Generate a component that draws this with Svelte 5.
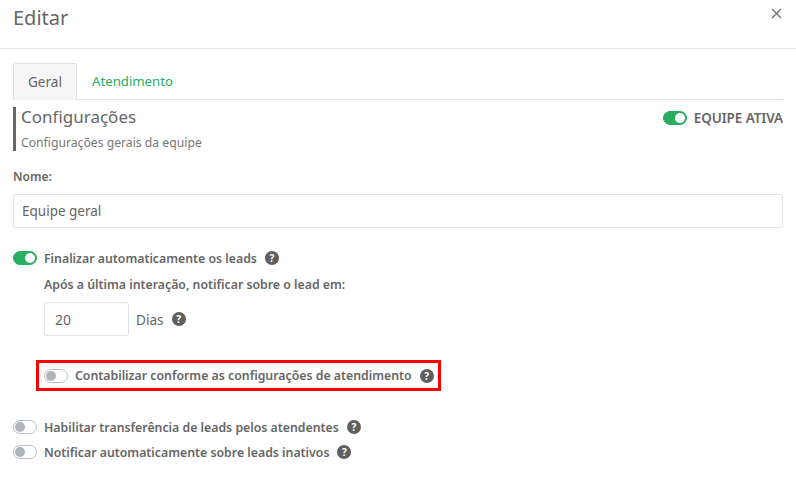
<script>
  const lowerToggles = [
    { id: 'transfer', label: 'Habilitar transferência de leads pelos atendentes' },
    { id: 'inactive', label: 'Notificar automaticamente sobre leads inativos' }
  ];
</script>

{#snippet help()}
  <span class="help" aria-hidden="true">?</span>
{/snippet}

{#snippet toggle(on)}
  <span class="toggle" class:on><span class="knob"></span></span>
{/snippet}

<div class="modal">
  <header class="modal-header">
    <h1>Editar</h1>
    <button class="close" aria-label="Fechar">
      <svg viewBox="0 0 10 10" aria-hidden="true"><path d="M1 1l8 8M9 1l-8 8" /></svg>
    </button>
  </header>

  <div class="modal-body">
    <nav class="tabs">
      <span class="tab active">Geral</span>
      <span class="tab">Atendimento</span>
    </nav>

    <section class="section-head">
      <div class="section-title">
        <h2>Configurações</h2>
        <p>Configurações gerais da equipe</p>
      </div>
      <div class="team-active">
        {@render toggle(true)}
        <span>EQUIPE ATIVA</span>
      </div>
    </section>

    <label class="name-label" for="nome">Nome:</label>
    <input id="nome" class="input" value="Equipe geral" />

    <div class="row auto-row">
      {@render toggle(true)}
      <span class="label">Finalizar automaticamente os leads</span>
      {@render help()}
    </div>

    <div class="nested">
      <p class="label">Após a última interação, notificar sobre o lead em:</p>
      <div class="days">
        <input class="input small" value="20" />
        <span class="unit">Dias</span>
        {@render help()}
      </div>
      <div class="row highlight">
        {@render toggle(false)}
        <span class="label">Contabilizar conforme as configurações de atendimento</span>
        {@render help()}
      </div>
    </div>

    <div class="lower">
      {#each lowerToggles as item (item.id)}
        <div class="row">
          {@render toggle(false)}
          <span class="label">{item.label}</span>
          {@render help()}
        </div>
      {/each}
    </div>
  </div>
</div>

<style>
  :global(body) {
    background: #fff;
  }

  .modal {
    width: 796px;
    height: 482px;
    overflow: hidden;
    font-family: "Noto Sans", "Open Sans", sans-serif;
    color: #666;
    background: #fff;
  }

  .modal-header {
    height: 49px;
    box-sizing: border-box;
    display: flex;
    justify-content: space-between;
    padding: 5px 13px 0;
    border-bottom: 1px solid #e2e4ea;
  }

  h1 {
    margin: 0;
    font-size: 20px;
    font-weight: 400;
    line-height: 26px;
    color: #666;
  }

  .close {
    width: 11px;
    height: 11px;
    padding: 0;
    margin-top: 3px;
    margin-right: 1px;
    border: 0;
    background: none;
  }

  .close svg {
    display: block;
    width: 11px;
    height: 11px;
    fill: none;
    stroke: #777;
    stroke-width: 1.3;
  }

  .modal-body {
    padding: 14px 13px 0;
  }

  .tabs {
    display: flex;
    height: 37px;
    box-sizing: border-box;
    border-bottom: 1px solid #dee2e6;
    font-size: 13.2px;
  }

  .tab {
    padding: 0 15px;
    line-height: 36px;
    color: #27ae60;
  }

  .tab.active {
    width: 64px;
    box-sizing: border-box;
    height: 37px;
    padding: 0;
    font-size: 13.6px;
    text-align: center;
    color: #666;
    background: #f6f6f6;
    border: 1px solid #dee2e6;
    border-bottom: 0;
    border-radius: 3px 3px 0 0;
  }

  .section-head {
    display: flex;
    justify-content: space-between;
    margin-top: 7px;
    height: 44px;
    border-left: 3px solid #666;
  }

  .section-title {
    padding-left: 5px;
  }

  h2 {
    margin: 0;
    font-size: 17px;
    font-weight: 400;
    line-height: 20px;
    color: #666;
  }

  .section-title p {
    margin: 8px 0 0;
    font-size: 12.2px;
    line-height: 16px;
    color: #777;
  }

  .team-active {
    display: flex;
    align-items: center;
    height: 22px;
    font-size: 13.5px;
    font-weight: 600;
    letter-spacing: -0.1px;
    color: #666;
  }

  .name-label {
    display: block;
    margin-top: 17px;
    font-size: 12px;
    font-weight: 600;
    line-height: 17px;
  }

  .input {
    display: block;
    box-sizing: border-box;
    width: 100%;
    height: 34px;
    margin-top: 9px;
    padding: 0 8px;
    border: 1px solid #e0e2e7;
    border-radius: 3px;
    font: inherit;
    font-size: 13.5px;
    color: #666;
    background: #fff;
    outline: none;
  }

  .input.small {
    width: 85px;
    margin: 0;
    padding: 0 10px;
    font-size: 14px;
  }

  .row {
    display: flex;
    align-items: center;
    height: 20px;
  }

  .auto-row {
    margin-top: 20px;
  }

  .label {
    margin: 0;
    font-size: 12.3px;
    font-weight: 600;
    line-height: 17px;
    color: #666;
  }

  .toggle {
    display: flex;
    align-items: center;
    flex: none;
    box-sizing: border-box;
    width: 24px;
    height: 14px;
    padding: 0 1px;
    margin-right: 7px;
    border: 1px solid #b8c0ca;
    border-radius: 7px;
    background: #fff;
  }

  .knob {
    width: 10px;
    height: 10px;
    border-radius: 50%;
    background: #adb5bd;
  }

  .toggle.on {
    justify-content: flex-end;
    border-color: #27ae60;
    background: #27ae60;
  }

  .toggle.on .knob {
    background: #fff;
  }

  .help {
    flex: none;
    width: 14px;
    height: 14px;
    margin-left: 8px;
    border-radius: 50%;
    font-size: 10px;
    font-weight: 700;
    line-height: 14px;
    text-align: center;
    color: #fff;
    background: #5f5f5f;
  }

  .nested {
    padding-left: 31px;
  }

  .nested > .label {
    margin-top: 8px;
  }

  .days {
    display: flex;
    align-items: center;
    margin-top: 9px;
  }

  .unit {
    margin-left: 7px;
    font-size: 13.6px;
    color: #666;
  }

  .highlight {
    width: 405px;
    height: 31px;
    box-sizing: border-box;
    margin: 24px 0 0 -8px;
    padding-left: 5px;
    border: 3px solid #f00;
  }

  .lower {
    display: flex;
    flex-direction: column;
    gap: 5px;
    margin-top: 26px;
  }
</style>
